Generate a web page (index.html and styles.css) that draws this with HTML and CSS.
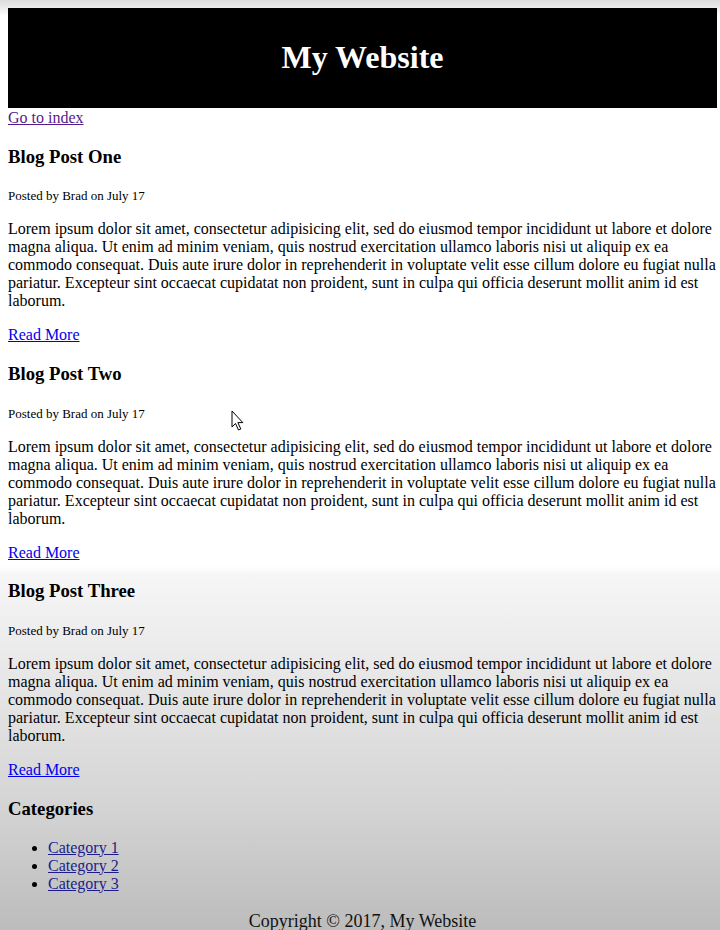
FILE: index.html
```html
<!DOCTYPE html>
<html>
<head>
<meta charset="utf-8">
<title>My Website</title>
<link rel="stylesheet" href="styles.css">
</head>
<body>
<header class="site-header">
  <h1 class="site-title">My Website</h1>
</header>
<a class="link-visited" href="#">Go to index</a>

<h3 class="post-title">Blog Post One</h3>
<p class="post-meta"><small>Posted by Brad on July 17</small></p>
<p class="post-body">Lorem ipsum dolor sit amet, consectetur adipisicing elit, sed do eiusmod tempor incididunt ut labore et dolore magna aliqua. Ut enim ad minim veniam, quis nostrud exercitation ullamco laboris nisi ut aliquip ex ea commodo consequat. Duis aute irure dolor in reprehenderit in voluptate velit esse cillum dolore eu fugiat nulla pariatur. Excepteur sint occaecat cupidatat non proident, sunt in culpa qui officia deserunt mollit anim id est laborum.</p>
<p class="post-more"><a class="link" href="#">Read More</a></p>

<h3 class="post-title">Blog Post Two</h3>
<p class="post-meta"><small>Posted by Brad on July 17</small></p>
<p class="post-body">Lorem ipsum dolor sit amet, consectetur adipisicing elit, sed do eiusmod tempor incididunt ut labore et dolore magna aliqua. Ut enim ad minim veniam, quis nostrud exercitation ullamco laboris nisi ut aliquip ex ea commodo consequat. Duis aute irure dolor in reprehenderit in voluptate velit esse cillum dolore eu fugiat nulla pariatur. Excepteur sint occaecat cupidatat non proident, sunt in culpa qui officia deserunt mollit anim id est laborum.</p>
<p class="post-more"><a class="link" href="#">Read More</a></p>

<h3 class="post-title">Blog Post Three</h3>
<p class="post-meta"><small>Posted by Brad on July 17</small></p>
<p class="post-body">Lorem ipsum dolor sit amet, consectetur adipisicing elit, sed do eiusmod tempor incididunt ut labore et dolore magna aliqua. Ut enim ad minim veniam, quis nostrud exercitation ullamco laboris nisi ut aliquip ex ea commodo consequat. Duis aute irure dolor in reprehenderit in voluptate velit esse cillum dolore eu fugiat nulla pariatur. Excepteur sint occaecat cupidatat non proident, sunt in culpa qui officia deserunt mollit anim id est laborum.</p>
<p class="post-more"><a class="link" href="#">Read More</a></p>

<h3 class="post-title">Categories</h3>
<ul class="cat-list">
  <li><a class="cat-link" href="#">Category 1</a></li>
  <li><a class="cat-link" href="#">Category 2</a></li>
  <li><a class="cat-link" href="#">Category 3</a></li>
</ul>

<footer class="site-footer">
  <p class="copyright">Copyright &copy; 2017, My Website</p>
</footer>

<svg class="cursor" width="14" height="22" viewBox="0 0 14 22">
  <path d="M1 1 L1 17 L4.5 13.5 L7.5 20 L9.8 19 L6.9 12.6 L11.8 12.6 Z" fill="#fff" stroke="#000" stroke-width="1" stroke-linejoin="miter"/>
</svg>
</body>
</html>
```

FILE: styles.css
```css
html {
  background: linear-gradient(to bottom, #dcdcdc 0px, #ececec 8px, #ffffff 16px, #ffffff 566px, #f6f6f6 574px, #d6d6d6 795px, #bcbcbc 930px);
  min-height: 930px;
}

body {
  margin: 8px 3px 8px 8px;
  font-family: "Liberation Serif", "Times New Roman", serif;
  font-size: 16px;
  color: #000;
  position: relative;
}

.site-header {
  background: #000;
  color: #fff;
  padding: 10px;
  margin-bottom: 1px;
  text-align: center;
}

.site-title {
  margin: 21.44px 0;
  font-size: 32px;
  font-weight: bold;
}

.link-visited {
  color: #551a8b;
}

.link {
  color: #0000ee;
}

.post-title {
  font-size: 18.72px;
  margin: 18.72px 0 18.72px;
}

.post-meta {
  margin: 16px 0;
}

.post-meta small {
  font-size: 13px;
}

.post-body {
  margin: 16px 0;
}

.post-more {
  margin: 16px 0;
}

.cat-list {
  margin: 16px 0;
  padding-left: 40px;
}

.cat-link {
  color: #1c1c8a;
}

.site-footer {
  text-align: center;
}

.copyright {
  margin: 18px 0 0;
  font-size: 18px;
  color: #111;
}

.cursor {
  position: absolute;
  left: 223px;
  top: 402px;
}
```
